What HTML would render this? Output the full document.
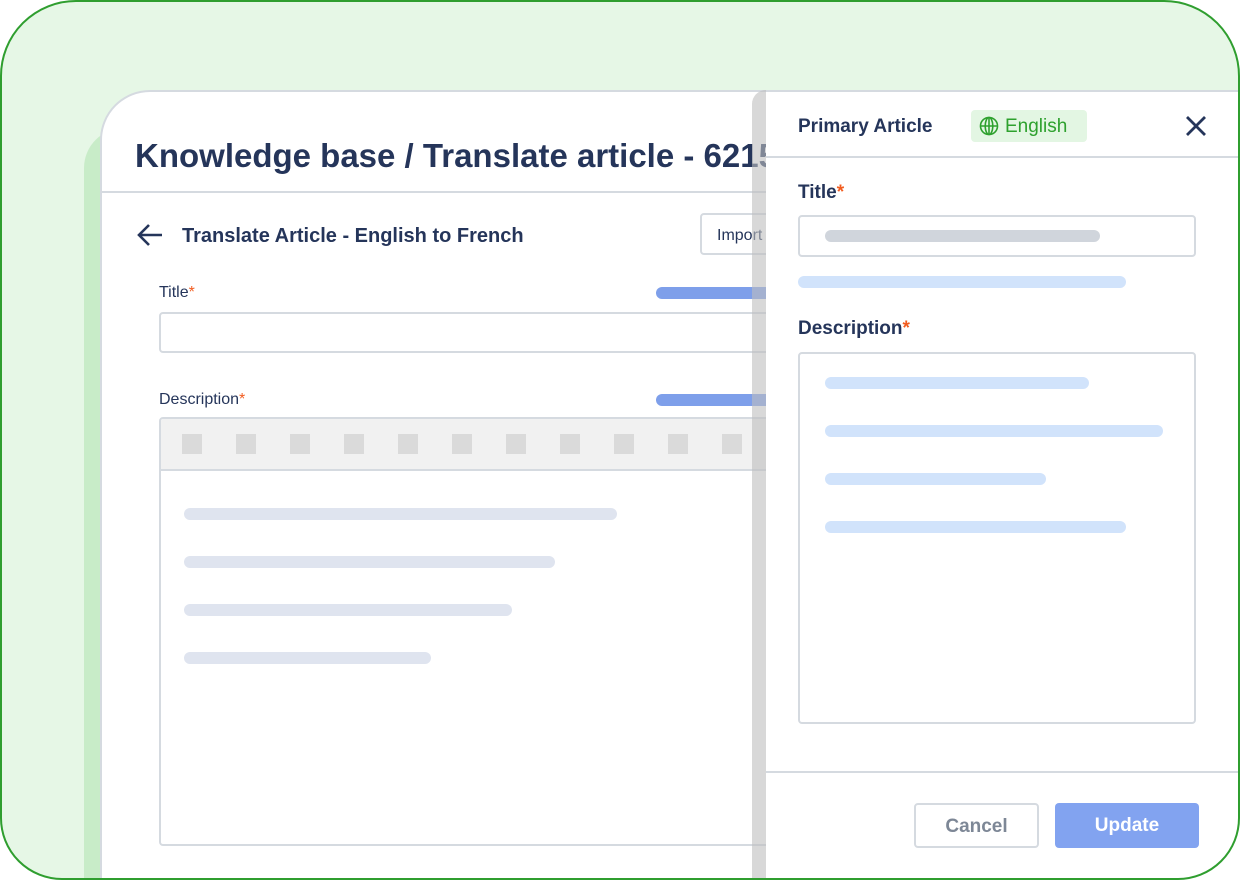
<!DOCTYPE html>
<html><head><style>
*{box-sizing:border-box;margin:0;padding:0}
body{width:1240px;height:880px;overflow:hidden;background:#fff;font-family:"Liberation Sans",Arial,sans-serif;color:#25355a}
.outer{position:absolute;left:0;top:0;width:1240px;height:880px;border-radius:76px 76px 62px 62px;background:#e6f7e6;overflow:hidden}
.brd{position:absolute;left:0;top:0;width:1240px;height:880px;border:2px solid #2f9e2f;border-radius:76px 76px 62px 62px;z-index:5}
.abs{position:absolute}
.bar{position:absolute;border-radius:6px}
</style></head><body>
<div class="outer">
 <div class="abs" style="left:84px;top:128px;width:40px;height:760px;background:#c8ecc8;border-radius:40px 0 0 0"></div>
 <div class="abs" style="left:100px;top:90px;width:1200px;height:820px;background:#fff;border:2px solid #d5dae0;border-radius:50px 0 0 0"></div>
 <div class="abs" style="left:135px;top:137px;font-size:33px;font-weight:bold;white-space:nowrap">Knowledge base / Translate article - 6215</div>
 <div class="abs" style="left:100px;top:191px;width:700px;height:2px;background:#d5dae0"></div>
 <svg class="abs" style="left:136px;top:222px" width="28" height="26" viewBox="0 0 28 26"><path d="M26 13H3M13 3L3 13l10 10" stroke="#25355a" stroke-width="2.6" fill="none"/></svg>
 <div class="abs" style="left:182px;top:225px;font-size:20px;font-weight:bold;white-space:nowrap">Translate Article - English to French</div>
 <div class="abs" style="left:700px;top:213px;width:90px;height:42px;border:2px solid #d5dae0;border-radius:4px;font-size:16px;padding:12px 0 0 15px">Import</div>
 <div class="abs" style="left:159px;top:284px;font-size:16px">Title<span style="color:#f25c1f">*</span></div>
 <div class="bar" style="left:656px;top:287px;width:120px;height:12px;background:#7e9fea"></div>
 <div class="abs" style="left:159px;top:312px;width:640px;height:41px;border:2px solid #d5dae0;border-radius:4px"></div>
 <div class="abs" style="left:159px;top:391px;font-size:16px">Description<span style="color:#f25c1f">*</span></div>
 <div class="bar" style="left:656px;top:394px;width:120px;height:12px;background:#7e9fea"></div>
 <div class="abs" style="left:159px;top:417px;width:640px;height:429px;border:2px solid #d5dae0;border-radius:4px;overflow:hidden">
  <div style="height:52px;background:#f1f1f1;border-bottom:2px solid #d5dae0;position:relative">
   <div class="abs" style="left:21px;top:15px;width:660px;height:20px;background:repeating-linear-gradient(90deg,#dadada 0 20px,transparent 20px 54px)"></div>
  </div>
 </div>
 <div class="bar" style="left:184px;top:508px;width:433px;height:12px;background:#dfe4ef"></div>
 <div class="bar" style="left:184px;top:556px;width:371px;height:12px;background:#dfe4ef"></div>
 <div class="bar" style="left:184px;top:604px;width:328px;height:12px;background:#dfe4ef"></div>
 <div class="bar" style="left:184px;top:652px;width:247px;height:12px;background:#dfe4ef"></div>
 <div class="abs" style="left:752px;top:90px;width:14px;height:800px;background:rgba(190,190,190,0.6);border-radius:14px 0 0 0"></div>
 <div class="abs" style="left:766px;top:90px;width:480px;height:800px;background:#fff;border-top:2px solid #d5dae0"></div>
 <div class="abs" style="left:798px;top:116px;font-size:19px;font-weight:bold;white-space:nowrap">Primary Article</div>
 <div class="abs" style="left:971px;top:110px;width:116px;height:32px;background:#e3f6e3;border-radius:4px;color:#2ea12e;font-size:19px;padding:6px 0 0 34px">English</div>
 <svg class="abs" style="left:979px;top:116px" width="20" height="20" viewBox="0 0 20 20" fill="none" stroke="#2ea12e" stroke-width="1.6"><circle cx="10" cy="10" r="8.5"/><ellipse cx="10" cy="10" rx="3.8" ry="8.5"/><path d="M1.5 10h17M10 1.5v17"/></svg>
 <svg class="abs" style="left:1184px;top:114px" width="24" height="24" viewBox="0 0 24 24"><path d="M3 3l18 18M21 3L3 21" stroke="#25355a" stroke-width="2.8"/></svg>
 <div class="abs" style="left:766px;top:156px;width:480px;height:2px;background:#d5dae0"></div>
 <div class="abs" style="left:798px;top:182px;font-size:19px;font-weight:bold">Title<span style="color:#f25c1f">*</span></div>
 <div class="abs" style="left:798px;top:215px;width:398px;height:42px;border:2px solid #d5dae0;border-radius:4px"></div>
 <div class="bar" style="left:825px;top:230px;width:275px;height:12px;background:#d0d5dc"></div>
 <div class="bar" style="left:798px;top:276px;width:328px;height:12px;background:#d1e3fb"></div>
 <div class="abs" style="left:798px;top:318px;font-size:19px;font-weight:bold">Description<span style="color:#f25c1f">*</span></div>
 <div class="abs" style="left:798px;top:352px;width:398px;height:372px;border:2px solid #d5dae0;border-radius:4px"></div>
 <div class="bar" style="left:825px;top:377px;width:264px;height:12px;background:#d1e3fb"></div>
 <div class="bar" style="left:825px;top:425px;width:338px;height:12px;background:#d1e3fb"></div>
 <div class="bar" style="left:825px;top:473px;width:221px;height:12px;background:#d1e3fb"></div>
 <div class="bar" style="left:825px;top:521px;width:301px;height:12px;background:#d1e3fb"></div>
 <div class="abs" style="left:766px;top:771px;width:480px;height:2px;background:#d5dae0"></div>
 <div class="abs" style="left:914px;top:803px;width:125px;height:45px;border:2px solid #d5dae0;border-radius:4px;color:#7d8796;font-size:19px;font-weight:bold;text-align:center;line-height:43px">Cancel</div>
 <div class="abs" style="left:1055px;top:803px;width:144px;height:45px;background:#82a3f0;border-radius:4px;color:#fff;font-size:19px;font-weight:bold;text-align:center;line-height:45px">Update</div>
</div>
<div class="brd"></div>
</body></html>
